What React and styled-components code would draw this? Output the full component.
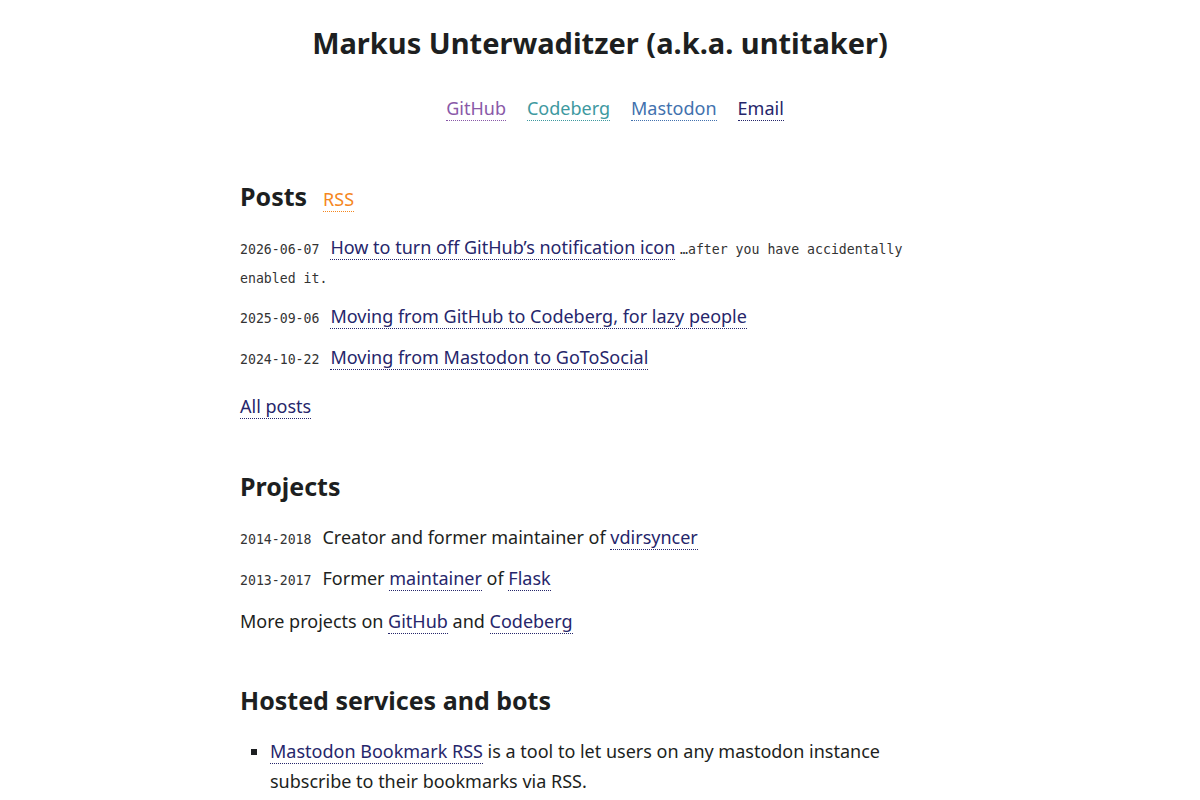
import React from "react";
import styled, { createGlobalStyle } from "styled-components";

const GlobalStyle = createGlobalStyle`
  body {
    margin: 0;
    background: #ffffff;
    color: #1d1f21;
    font-family: "Noto Sans", "Open Sans", sans-serif;
    font-size: 18px;
    line-height: 29px;
  }
`;

const linkColors = {
  github: "#8959a8",
  codeberg: "#3e999f",
  mastodon: "#4271ae",
  rss: "#f5871f",
  default: "#26266b",
};

const Page = styled.main`
  width: 720px;
  margin: 0 auto;
  padding: 25px 0 40px;
`;

const Title = styled.h1`
  margin: 0;
  text-align: center;
  font-size: 29px;
  line-height: 36px;
  font-weight: 700;
  color: #1d1f21;
`;

const Nav = styled.ul`
  display: flex;
  justify-content: center;
  gap: 21px;
  list-style: none;
  margin: 33px 0 0;
  padding: 0 0 0 30px;
`;

const Link = styled.a`
  color: ${(p) => linkColors[p.$tone || "default"]};
  text-decoration: none;
  border-bottom: 1px dotted ${(p) => linkColors[p.$tone || "default"]};
`;

const Section = styled.section`
  margin-top: ${(p) => p.$gap || 51}px;
`;

const Heading = styled.h2`
  margin: 0 0 22px;
  font-size: 25px;
  line-height: 29px;
  font-weight: 700;
`;

const Small = styled.span`
  margin-left: 16px;
  font-size: 18px;
  line-height: 1;
  font-weight: 400;
`;

const Row = styled.p`
  margin: 0 0 ${(p) => p.$after ?? 12}px;
`;

const Mono = styled.span`
  font-family: "DejaVu Sans Mono", monospace;
  font-size: 13.2px;
  line-height: 1;
  color: #333333;
`;

const Date = styled(Mono)`
  margin-right: 11px;
`;

const Bullets = styled.ul`
  margin: -1px 0 0;
  padding-left: 30px;
  list-style: square;
  line-height: 30px;
`;

const posts = [
  {
    date: "2026-06-07",
    title: "How to turn off GitHub’s notification icon",
    excerpt: "…after you have accidentally enabled it.",
  },
  { date: "2025-09-06", title: "Moving from GitHub to Codeberg, for lazy people" },
  { date: "2024-10-22", title: "Moving from Mastodon to GoToSocial" },
];

export default function App() {
  return (
    <>
      <GlobalStyle />
      <Page>
        <Title>Markus Unterwaditzer (a.k.a. untitaker)</Title>
        <Nav>
          <li><Link $tone="github" href="#">GitHub</Link></li>
          <li><Link $tone="codeberg" href="#">Codeberg</Link></li>
          <li><Link $tone="mastodon" href="#">Mastodon</Link></li>
          <li><Link href="#">Email</Link></li>
        </Nav>

        <Section $gap={59}>
          <Heading>
            Posts
            <Small>
              <Link $tone="rss" href="#">RSS</Link>
            </Small>
          </Heading>
          {posts.map((post, i) => (
            <Row key={post.date} $after={post.excerpt ? 11 : i === posts.length - 1 ? 20 : 12}>
              <Date>{post.date}</Date>
              <Link href="#">{post.title}</Link>
              {post.excerpt && <> <Mono>{post.excerpt}</Mono></>}
            </Row>
          ))}
          <Row $after={0}>
            <Link href="#">All posts</Link>
          </Row>
        </Section>

        <Section>
          <Heading>Projects</Heading>
          <Row>
            <Date>2014-2018</Date>
            Creator and former maintainer of <Link href="#">vdirsyncer</Link>
          </Row>
          <Row $after={14}>
            <Date>2013-2017</Date>
            Former <Link href="#">maintainer</Link> of <Link href="#">Flask</Link>
          </Row>
          <Row $after={0}>
            More projects on <Link href="#">GitHub</Link> and{" "}
            <Link href="#">Codeberg</Link>
          </Row>
        </Section>

        <Section $gap={50}>
          <Heading>Hosted services and bots</Heading>
          <Bullets>
            <li>
              <Link href="#">Mastodon Bookmark RSS</Link> is a tool to let users on
              any mastodon instance subscribe to their bookmarks via RSS.
            </li>
          </Bullets>
        </Section>
      </Page>
    </>
  );
}
